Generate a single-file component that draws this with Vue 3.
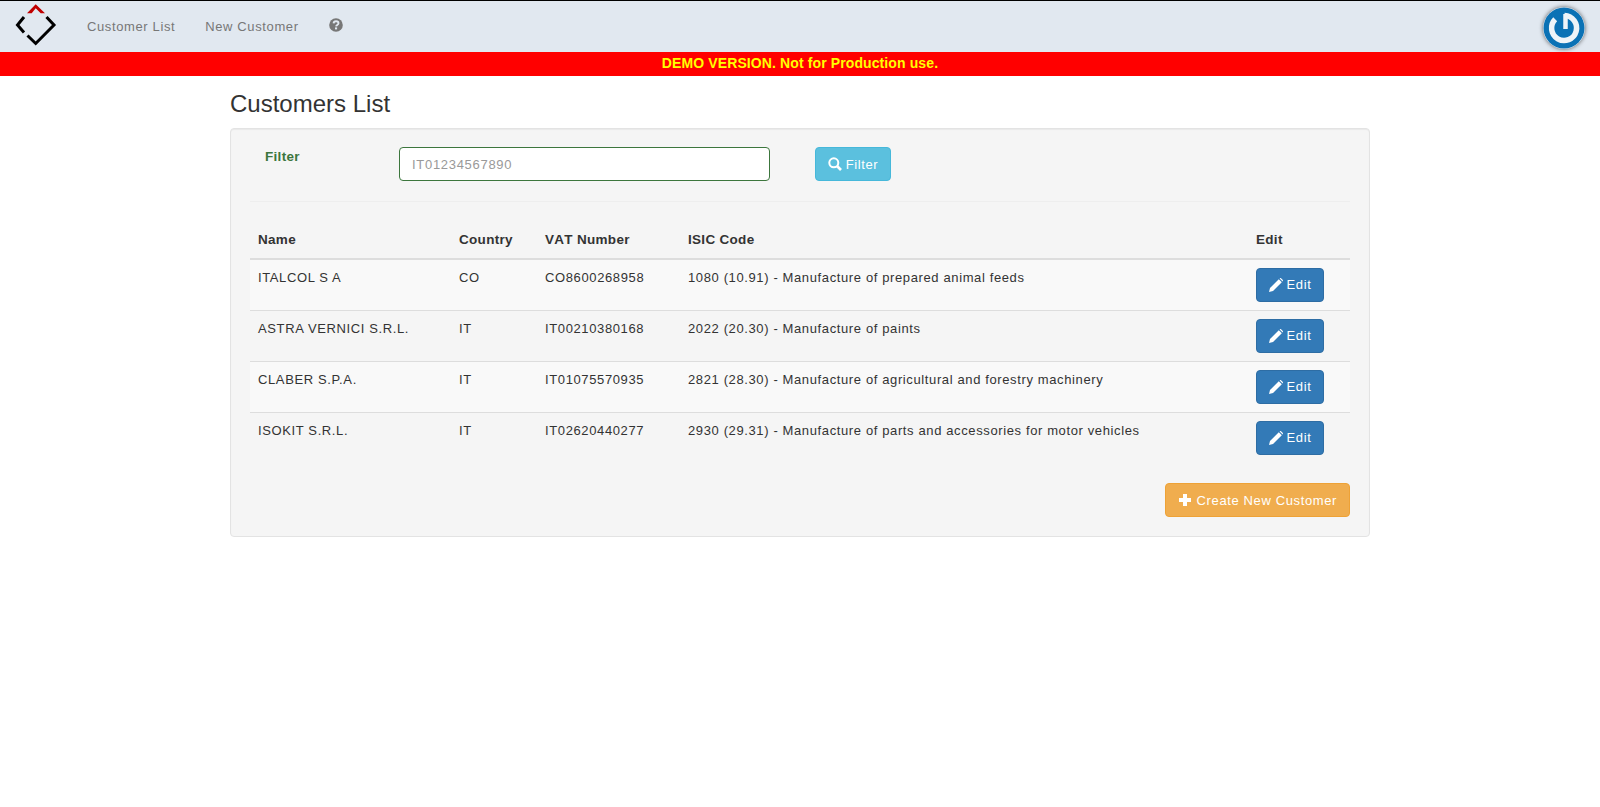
<script setup>
const customers = [
  { name: 'ITALCOL S A', country: 'CO', vat: 'CO8600268958', isic: '1080 (10.91) - Manufacture of prepared animal feeds' },
  { name: 'ASTRA VERNICI S.R.L.', country: 'IT', vat: 'IT00210380168', isic: '2022 (20.30) - Manufacture of paints' },
  { name: 'CLABER S.P.A.', country: 'IT', vat: 'IT01075570935', isic: '2821 (28.30) - Manufacture of agricultural and forestry machinery' },
  { name: 'ISOKIT S.R.L.', country: 'IT', vat: 'IT02620440277', isic: '2930 (29.31) - Manufacture of parts and accessories for motor vehicles' }
]
</script>

<template>
  <nav class="navbar">
    <a class="brand">
      <svg width="44" height="44" viewBox="0 0 44 44">
        <path d="M13 9.300 L21.700 0.300 L31 9.300 H26.700 L21.700 4.300 L17.700 9.300 Z" fill="#c00000" />
        <path d="M10 13 L3.500 21 L10 28.500 M13.500 31.500 L21.700 39.500 L40 21 L32.500 13" fill="none" stroke="#000" stroke-width="3" />
      </svg>
    </a>
    <a class="nav-link">Customer List</a>
    <a class="nav-link">New Customer</a>
    <a class="nav-link help">
      <svg width="14" height="14" viewBox="0 0 14 14">
        <circle cx="7" cy="7" r="6.800" fill="#777" />
        <path d="M4.600 5.400 C4.700 2.600 9.400 2.500 9.500 5.200 C9.500 6.900 7.300 6.900 7.100 8.300" fill="none" stroke="#e1e8f0" stroke-width="1.900" />
        <rect x="6" y="9.400" width="2.100" height="2" fill="#e1e8f0" />
      </svg>
    </a>
    <div class="power">
      <svg width="42" height="42" viewBox="0 0 42 42">
        <circle cx="21" cy="21" r="20.500" fill="#0b72b5" />
        <path d="M21.500 8.500 A12.500 12.500 0 1 1 12.200 12.200" fill="none" stroke="#eef4f8" stroke-width="5.500" />
        <path d="M22.500 7 V22" stroke="#eef4f8" stroke-width="4.500" />
      </svg>
    </div>
  </nav>
  <div class="demo">DEMO VERSION. Not for Production use.</div>

  <main class="container">
    <h3>Customers List</h3>
    <section class="well">
      <form class="filter" @submit.prevent>
        <label>Filter</label>
        <input type="text" placeholder="IT01234567890" />
        <button class="btn btn-info">
          <svg width="14" height="14" viewBox="0 0 14 14">
            <circle cx="5.800" cy="5.800" r="4.500" fill="none" stroke="#fff" stroke-width="2" />
            <path d="M9 9 L13 13" stroke="#fff" stroke-width="2.600" />
          </svg>
          Filter
        </button>
      </form>
      <hr />
      <table>
        <colgroup>
          <col class="c-name" /><col class="c-country" /><col class="c-vat" /><col /><col class="c-edit" />
        </colgroup>
        <thead>
          <tr>
            <th>Name</th>
            <th>Country</th>
            <th>VAT Number</th>
            <th>ISIC Code</th>
            <th>Edit</th>
          </tr>
        </thead>
        <tbody>
          <tr v-for="c in customers" :key="c.vat">
            <td>{{ c.name }}</td>
            <td>{{ c.country }}</td>
            <td>{{ c.vat }}</td>
            <td>{{ c.isic }}</td>
            <td>
              <button class="btn btn-primary">
                <svg width="14" height="14" viewBox="0 0 14 14">
                  <path d="M0 14 L1 10 L9.800 1.200 L12.800 4.200 L4 13 Z M10.600 0.400 C11.200 -0.200 11.800 -0.100 12.300 0.400 L13.600 1.700 C14.100 2.200 14.100 2.800 13.600 3.400 Z" fill="#fff" />
                </svg>
                Edit
              </button>
            </td>
          </tr>
        </tbody>
      </table>
      <div class="actions">
        <button class="btn btn-warning">
          <svg width="14" height="14" viewBox="0 0 14 14">
            <path d="M5 1 H9 V5 H13 V9 H9 V13 H5 V9 H1 V5 H5 Z" fill="#fff" />
          </svg>
          Create New Customer
        </button>
      </div>
    </section>
  </main>
</template>

<style>
body {
  background: #fff;
}
</style>

<style scoped>
.navbar {
  display: flex;
  align-items: flex-start;
  height: 51px;
  background: #e1e8f0;
  border-top: 1px solid #000;
  font-family: "Liberation Sans", Arial, sans-serif;
  font-size: 13px;
  letter-spacing: 0.62px;
  position: relative;
}

.brand {
  width: 44px;
  height: 44px;
  margin: 3px 0 0 14px;
}

.nav-link {
  color: #777;
  padding: 17px 15px 0;
  line-height: 18px;
}

.brand + .nav-link {
  padding-left: 29px;
}

.help svg {
  display: block;
}

.power {
  position: absolute;
  right: 15px;
  top: 6px;
  width: 42px;
  height: 42px;
  border-radius: 50%;
  box-shadow: 0 0 4px rgba(0, 0, 0, 0.6);
}

.power svg {
  display: block;
}

.demo {
  height: 24px;
  line-height: 22px;
  background: #f00;
  color: #ff0;
  text-align: center;
  font-family: "Liberation Sans", Arial, sans-serif;
  font-size: 14px;
  font-weight: bold;
  letter-spacing: 0.11px;
}

.container {
  width: 1140px;
  margin: 0 auto;
  color: #333;
  font-family: "Liberation Sans", Arial, sans-serif;
  font-size: 13px;
  letter-spacing: 0.62px;
}

h3 {
  margin: 15px 0 11px;
  font-size: 24px;
  font-weight: 500;
  line-height: 26px;
  letter-spacing: 0;
}

.well {
  background: #f5f5f5;
  border: 1px solid #e3e3e3;
  border-radius: 4px;
  box-shadow: inset 0 1px 1px rgba(0, 0, 0, 0.05);
  padding: 18px 19px 19px;
}

.filter {
  display: flex;
  align-items: flex-start;
  height: 34px;
}

.filter label {
  width: 149px;
  padding: 1px 0 0 15px;
  box-sizing: border-box;
  color: #3c763d;
  font-size: 13.500px;
  font-weight: bold;
  letter-spacing: 0.3px;
  line-height: 18px;
}

.filter input {
  width: 371px;
  height: 34px;
  box-sizing: border-box;
  padding: 6px 12px;
  border: 1px solid #3c763d;
  border-radius: 4px;
  background: #fff;
  font: inherit;
  letter-spacing: 0.7px;
  outline: none;
}

.filter input::placeholder {
  color: #999;
}

.filter .btn {
  margin-left: 45px;
  width: 76px;
  padding: 0;
}

hr {
  margin: 20px 0;
  border: 0;
  border-top: 1px solid #eee;
}

.btn {
  display: inline-flex;
  align-items: center;
  justify-content: center;
  gap: 4px;
  height: 34px;
  padding: 0 12px;
  border: 1px solid transparent;
  border-radius: 4px;
  color: #fff;
  font: inherit;
  letter-spacing: 0.62px;
}

.btn-info {
  background: #5bc0de;
  border-color: #46b8da;
}

.btn-primary {
  background: #337ab7;
  border-color: #2e6da4;
}

.btn-warning {
  background: #f0ad4e;
  border-color: #eea236;
  gap: 5px;
}

table {
  width: 100%;
  table-layout: fixed;
  border-collapse: collapse;
}

.c-name {
  width: 201px;
}

.c-country {
  width: 86px;
}

.c-vat {
  width: 143px;
}

.c-edit {
  width: 102px;
}

th {
  padding: 8px;
  height: 37px;
  box-sizing: border-box;
  text-align: left;
  font-size: 13.500px;
  letter-spacing: 0.3px;
  font-kerning: none;
  line-height: 20px;
  border-bottom: 2px solid #ddd;
}

td {
  padding: 8px;
  vertical-align: top;
  line-height: 20px;
  border-top: 1px solid #ddd;
}

thead + tbody tr:first-child td {
  border-top: 0;
}

tbody tr:nth-child(odd) {
  background: #f9f9f9;
}

td .btn {
  width: 68px;
  padding: 0;
  display: flex;
}

.actions {
  display: flex;
  justify-content: flex-end;
  margin-top: 20px;
}
</style>
